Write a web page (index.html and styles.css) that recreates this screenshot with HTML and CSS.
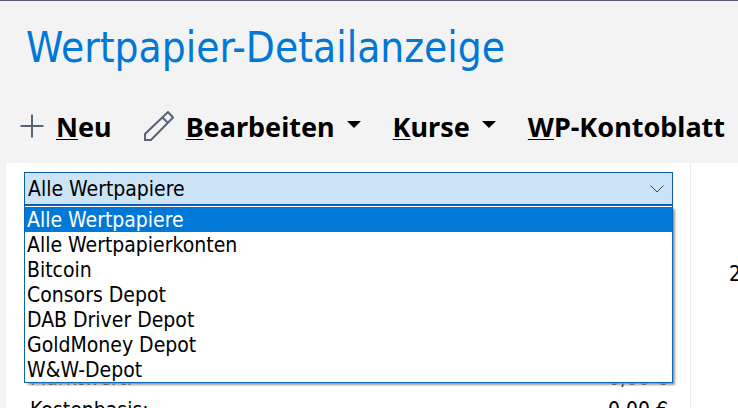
FILE: index.html
```html
<!DOCTYPE html>
<html lang="de">
<head>
    <meta charset="UTF-8">
    <meta name="viewport" content="width=device-width, initial-scale=1.0">
    <title>Wertpapier-Detailanzeige</title>
    <link rel="stylesheet" href="styles.css">
</head>
<body>

    <header class="header">
        <h1>Wertpapier-Detailanzeige</h1>

        <div class="toolbar">
            <button type="button" class="tool">
                <svg class="icon-plus" viewBox="0 0 24 24" width="24" height="24">
                    <path d="M12 0.500V23.500M0.500 12H23.500"/>
                </svg>
                <span><u>N</u>eu</span>
            </button>
            <button type="button" class="tool">
                <svg class="icon-pencil" viewBox="0 0 30 30" width="30" height="30">
                    <path d="M1 29V23L24 1L29 6.500L7 29ZM18.500 6.500L24 12"/>
                </svg>
                <span><u>B</u>earbeiten</span>
                <i class="arrow"></i>
            </button>
            <button type="button" class="tool">
                <span><u>K</u>urse</span>
                <i class="arrow"></i>
            </button>
            <button type="button" class="tool">
                <span><u>W</u>P-Kontoblatt</span>
            </button>
        </div>
    </header>

    <main class="content">
        <section class="details">
            <div class="combo">
                <select class="combo-box" aria-label="Auswahl">
                    <option>Alle Wertpapiere</option>
                </select>
                <svg class="chevron" viewBox="0 0 14 8" width="14" height="8">
                    <path d="M0.500 0.500L7 7L13.500 0.500"/>
                </svg>
                <select class="combo-list" size="7" aria-label="Wertpapiere und Konten">
                    <option selected>Alle Wertpapiere</option>
                    <option>Alle Wertpapierkonten</option>
                    <option>Bitcoin</option>
                    <option>Consors Depot</option>
                    <option>DAB Driver Depot</option>
                    <option>GoldMoney Depot</option>
                    <option>W&amp;W-Depot</option>
                </select>
            </div>

            <table class="values">
                <tr>
                    <th>Marktwert:</th>
                    <td>0,00 €</td>
                </tr>
                <tr>
                    <th>Kostenbasis:</th>
                    <td>0,00 €</td>
                </tr>
            </table>
        </section>

        <section class="chart">
            <span>2</span>
        </section>
    </main>

</body>
</html>
```
FILE: styles.css
```css
* {
    box-sizing: border-box;
}

body {
    margin: 0;
    height: 100vh;
    overflow: hidden;
    display: flex;
    flex-direction: column;
    background-color: #f3f3f3;
    border-top: 1px solid #565a70;
    font-family: Tahoma, "DejaVu Sans Condensed", sans-serif;
    font-size: 21px;
    color: #000;
}

h1 {
    margin: 0;
    padding-left: 26px;
    font-size: 42px;
    font-weight: normal;
    line-height: 52px;
    color: #0078d7;
    white-space: nowrap;
}

.header {
    padding: 21px 0 17px;
}

.toolbar {
    display: flex;
    gap: 32px;
    padding: 32px 0 0 20px;
}

.tool {
    display: flex;
    align-items: center;
    gap: 12px;
    height: 40px;
    padding: 0;
    border: none;
    background: none;
    font-family: Tahoma, "Noto Sans", sans-serif;
    font-size: 27px;
    font-weight: bold;
    color: #000;
    white-space: nowrap;
}

.tool u {
    text-decoration-thickness: 1px;
    text-underline-offset: 2px;
}

.tool svg {
    fill: none;
    stroke: #566477;
    stroke-width: 2;
}

.arrow {
    margin-bottom: 4px;
    border: 7px solid transparent;
    border-top-color: #000;
    border-bottom: none;
}

.content {
    flex: 1;
    display: flex;
    margin-left: 6px;
    background-color: #fff;
}

.details {
    flex: 1;
    padding: 9px 17px 0 18px;
    border-right: 1px solid #ececec;
}

.combo {
    position: relative;
    height: 190px;
}

.combo-box {
    appearance: none;
    width: 100%;
    height: 33px;
    padding: 0 3px;
    border: 1px solid #0a5cad;
    border-radius: 0;
    background-color: #cce4f7;
    font: inherit;
    color: #000;
}

.chevron {
    position: absolute;
    top: 13px;
    right: 9px;
    fill: none;
    stroke: #3c4652;
}

/* aufgeklappte Liste */
.combo-list {
    position: absolute;
    top: 33px;
    left: 0;
    width: 100%;
    height: 178px;
    padding: 1px 0 0;
    overflow: hidden;
    border: 1px solid #0a66b8;
    border-radius: 0;
    outline: none;
    background-color: #fff;
    box-shadow: 3px 3px 2px -1px #999;
    font: inherit;
    color: #000;
}

.combo-list option {
    height: 25px;
    min-height: 0;
    padding: 1px 2px 0;
    line-height: 24px;
}

.combo-list option:checked {
    background: linear-gradient(#0078d7, #0078d7);
    color: #fff;
    -webkit-text-fill-color: #fff;
}

.values {
    width: 100%;
    padding: 0 5px 0 6px;
    border-spacing: 0;
}

.values th,
.values td {
    height: 32px;
    padding: 0;
    font-weight: normal;
    text-align: left;
}

.values td {
    text-align: right;
}

.chart {
    width: 47px;
    padding: 99px 0 0 38px;
    overflow: hidden;
}
```
